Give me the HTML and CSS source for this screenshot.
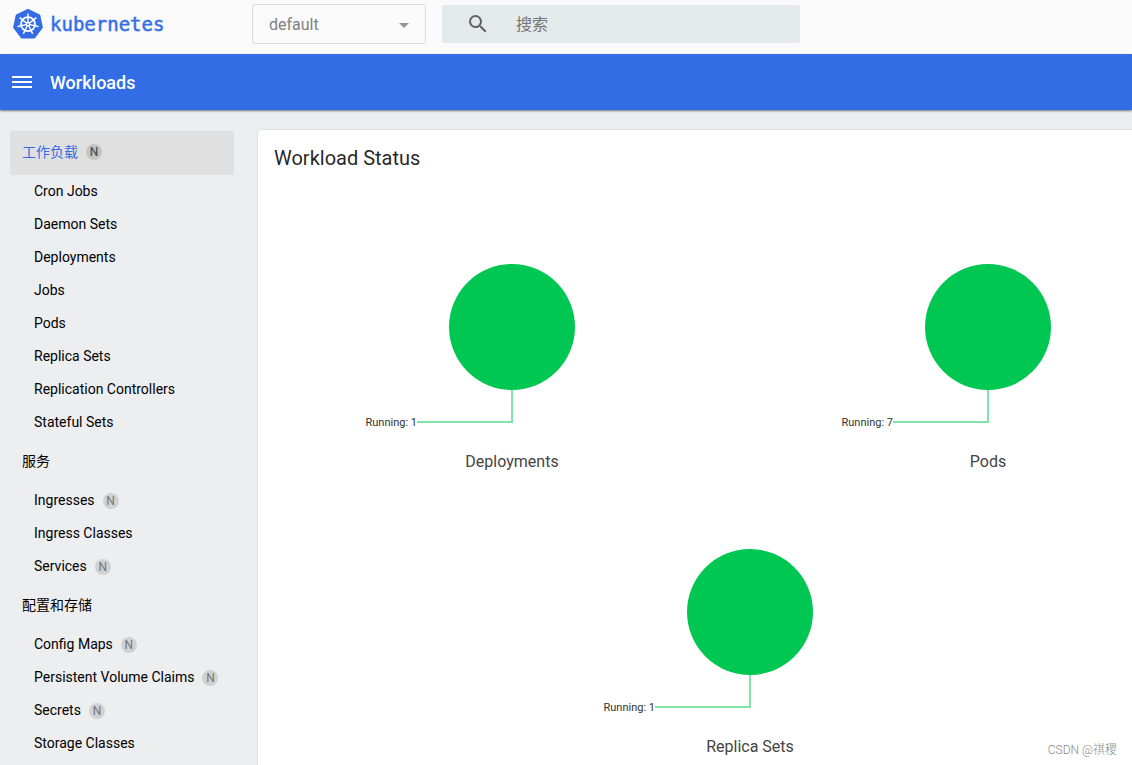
FILE: index.html
```html
<!DOCTYPE html>
<html lang="zh-CN">
<head>
<meta charset="utf-8">
<title>Kubernetes Dashboard</title>
<link rel="stylesheet" href="styles.css">
</head>
<body>
<header class="topbar">
  <a class="brand" href="#">
    <svg class="brand-logo" viewBox="0 0 30 30" aria-hidden="true">
      <path d="M15 1 26.3 6.4 28.9 18.4 21.3 28.4H8.7L1.1 18.4 3.7 6.4Z" fill="#326de6" stroke="#326de6" stroke-width="2" stroke-linejoin="round"/>
      <g fill="none" stroke="#fff" stroke-linecap="round">
        <circle cx="15" cy="15.2" r="7" stroke-width="1.8"/>
        <g stroke-width="1.4">
          <path id="spoke" d="M15 13.2V5"/>
          <use href="#spoke" transform="rotate(51.43 15 15.2)"/>
          <use href="#spoke" transform="rotate(102.86 15 15.2)"/>
          <use href="#spoke" transform="rotate(154.29 15 15.2)"/>
          <use href="#spoke" transform="rotate(205.71 15 15.2)"/>
          <use href="#spoke" transform="rotate(257.14 15 15.2)"/>
          <use href="#spoke" transform="rotate(308.57 15 15.2)"/>
        </g>
      </g>
      <circle cx="15" cy="15.2" r="2.4" fill="#fff"/>
      <circle cx="15" cy="15.2" r="0.9" fill="#326de6"/>
    </svg>
    <span class="brand-name">kubernetes</span>
  </a>
  <div class="namespace">
    <select class="namespace-select" aria-label="Namespace"><option>default</option></select>
    <svg class="namespace-arrow" viewBox="0 0 10 5" aria-hidden="true"><path d="M0 0h10L5 5Z" fill="#949494"/></svg>
  </div>
  <form class="search">
    <svg class="search-icon" viewBox="0 0 24 24" aria-hidden="true"><path fill="#616161" d="M15.5 14h-.79l-.28-.27A6.471 6.471 0 0 0 16 9.5 6.5 6.5 0 1 0 9.5 16c1.61 0 3.09-.59 4.23-1.57l.27.28v.79l5 4.99L20.49 19l-4.99-5zm-6 0C7.01 14 5 11.99 5 9.5S7.01 5 9.5 5 14 7.01 14 9.5 11.99 14 9.5 14z"/></svg>
    <input class="search-input" type="text" placeholder="搜索" aria-label="搜索">
  </form>
</header>
<div class="actionbar">
  <button class="menu-button" type="button" aria-label="Menu">
    <svg class="menu-icon" viewBox="0 0 24 24" aria-hidden="true"><path fill="#fff" d="M2 18h20v-2H2zM2 13h20v-2H2zM2 8h20V6H2z"/></svg>
  </button>
  <h1 class="page-title">Workloads</h1>
</div>
<div class="layout">
  <nav class="sidebar">
    <a class="nav-group nav-active" href="#">工作负载<span class="badge">N</span></a>
    <a class="nav-item" href="#">Cron Jobs</a>
    <a class="nav-item" href="#">Daemon Sets</a>
    <a class="nav-item" href="#">Deployments</a>
    <a class="nav-item" href="#">Jobs</a>
    <a class="nav-item" href="#">Pods</a>
    <a class="nav-item" href="#">Replica Sets</a>
    <a class="nav-item" href="#">Replication Controllers</a>
    <a class="nav-item" href="#">Stateful Sets</a>
    <a class="nav-group" href="#">服务</a>
    <a class="nav-item" href="#">Ingresses<span class="badge">N</span></a>
    <a class="nav-item" href="#">Ingress Classes</a>
    <a class="nav-item" href="#">Services<span class="badge">N</span></a>
    <a class="nav-group" href="#">配置和存储</a>
    <a class="nav-item" href="#">Config Maps<span class="badge">N</span></a>
    <a class="nav-item" href="#">Persistent Volume Claims<span class="badge">N</span></a>
    <a class="nav-item" href="#">Secrets<span class="badge">N</span></a>
    <a class="nav-item" href="#">Storage Classes</a>
  </nav>
  <main class="content">
    <section class="card">
      <h2 class="card-title">Workload Status</h2>
      <div class="charts">
        <figure class="chart">
          <svg class="pie" viewBox="0 0 300 248">
            <circle cx="150" cy="125" r="63" fill="#00c752"/>
            <path class="pie-line" d="M150 188V220H55"/>
            <text class="pie-label" x="55" y="224">Running: 1</text>
          </svg>
          <figcaption class="chart-name">Deployments</figcaption>
        </figure>
        <figure class="chart">
          <svg class="pie" viewBox="0 0 300 248">
            <circle cx="150" cy="125" r="63" fill="#00c752"/>
            <path class="pie-line" d="M150 188V220H55"/>
            <text class="pie-label" x="55" y="224">Running: 7</text>
          </svg>
          <figcaption class="chart-name">Pods</figcaption>
        </figure>
        <figure class="chart">
          <svg class="pie" viewBox="0 0 300 248">
            <circle cx="150" cy="125" r="63" fill="#00c752"/>
            <path class="pie-line" d="M150 188V220H55"/>
            <text class="pie-label" x="55" y="224">Running: 1</text>
          </svg>
          <figcaption class="chart-name">Replica Sets</figcaption>
        </figure>
      </div>
    </section>
  </main>
</div>
<div class="watermark">CSDN @祺稷</div>
</body>
</html>
```

FILE: styles.css
```css
* { box-sizing: border-box; }

body {
  margin: 0;
  height: 100vh;
  overflow: hidden;
  display: flex;
  flex-direction: column;
  background: #eceef0;
  color: rgba(0, 0, 0, 0.87);
  font-family: Roboto, "Noto Sans CJK SC", sans-serif;
  font-size: 14px;
}

a { color: inherit; text-decoration: none; }

.topbar {
  flex: none;
  display: flex;
  align-items: center;
  height: 54px;
  padding: 0 12px 6px;
  background: #fafafa;
}

.brand {
  display: flex;
  align-items: center;
  gap: 7px;
  width: 240px;
  padding-left: 1px;
  color: #326de6;
}

.brand-logo { width: 30px; height: 30px; }

.brand-name {
  font-family: "DejaVu Sans Mono", monospace;
  font-size: 19px;
  line-height: 24px;
  -webkit-text-stroke: 1px rgba(50, 109, 230, 0.5);
}

.namespace { position: relative; width: 174px; margin-right: 16px; }

.namespace-select {
  display: block;
  width: 100%;
  height: 40px;
  padding: 0 16px;
  appearance: none;
  border: 1px solid #dcdcdc;
  border-radius: 2px;
  background: #fafafa;
  color: #808080;
  font: 16px Roboto, sans-serif;
}

.namespace-arrow {
  position: absolute;
  right: 17px;
  top: 19px;
  width: 10px;
  height: 5px;
  pointer-events: none;
}

.search {
  display: flex;
  align-items: center;
  width: 358px;
  height: 38px;
  padding-left: 24px;
  gap: 26px;
  border-radius: 2px;
  background: #e4e9e9;
}

.search-icon { flex: none; width: 24px; height: 24px; }

.search-input {
  flex: 1;
  min-width: 0;
  height: 38px;
  padding: 0;
  border: 0;
  outline: 0;
  background: transparent;
  font: 16px Roboto, "Noto Sans CJK SC", sans-serif;
}

.search-input::placeholder { color: #757575; }

.actionbar {
  position: relative;
  flex: none;
  display: flex;
  align-items: center;
  gap: 16px;
  height: 56px;
  padding: 0 10px;
  background: #326de6;
  box-shadow: 0 1px 2px rgba(0, 0, 0, 0.5);
}

.menu-button {
  display: flex;
  padding: 0;
  border: 0;
  background: transparent;
}

.menu-icon { width: 24px; height: 24px; }

.page-title {
  margin: 0;
  padding-top: 2px;
  color: #fff;
  font-size: 18px;
  font-weight: 500;
  line-height: 24px;
}

.layout { flex: 1; min-height: 0; display: flex; }

.sidebar { flex: none; width: 244px; padding: 21px 10px 0; }

.nav-group,
.nav-item {
  display: flex;
  align-items: center;
  color: #000;
}

.nav-group { height: 45px; padding: 0 0 1px 12px; line-height: 20px; }
.nav-item { height: 33px; padding-left: 24px; line-height: 15px; }
.nav-active { height: 44px; padding-bottom: 2px; border-radius: 2px; background: #e0e0e0; color: #326de6; }

.badge {
  width: 16px;
  height: 16px;
  margin-left: 8px;
  border-radius: 50%;
  background: #d0d1d3;
  color: #757575;
  font-size: 12px;
  line-height: 16px;
  text-align: center;
}

.nav-active .badge { background: #c4c4c4; color: #555; font-weight: 500; }

.content { flex: 1; min-width: 0; padding: 20px 0 0 14px; overflow: hidden; }

.card {
  min-width: 984px;
  min-height: 100%;
  padding: 16px;
  border-radius: 4px;
  background: #fff;
  box-shadow: 0 0 2px rgba(0, 0, 0, 0.2);
}

.card-title {
  margin: 0 0 32px;
  font-size: 20px;
  font-weight: 400;
  line-height: 24px;
}

.charts { display: flex; flex-wrap: wrap; justify-content: center; }

.chart {
  display: flex;
  flex-direction: column;
  align-items: center;
  width: 50%;
  margin: 0;
  padding-bottom: 13px;
}

.pie { width: 300px; height: 248px; }
.pie-line { fill: none; stroke: #80e3a8; stroke-width: 2; }
.pie-label { fill: #333; font-size: 11px; text-anchor: end; }
.chart-name { color: #444; font-size: 16px; line-height: 24px; }

.watermark {
  position: absolute;
  right: 15px;
  bottom: 6px;
  color: #888;
  font-size: 12px;
  font-weight: 300;
  line-height: 18px;
}
```
